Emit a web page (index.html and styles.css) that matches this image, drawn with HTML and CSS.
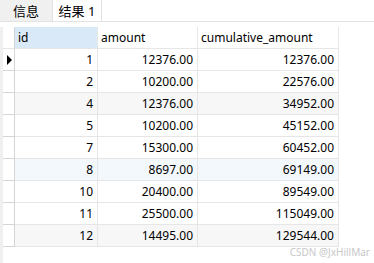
FILE: index.html
```html
<!DOCTYPE html>
<html>
<head>
<meta charset="utf-8">
<link rel="stylesheet" href="styles.css">
</head>
<body>
<div class="tabs">
  <div class="tab">信息</div>
  <div class="tab active">结果 1</div>
</div>
<div class="body">
  <div class="strip"></div>
  <div class="grid">
    <div class="sel head"></div>
    <div class="cell head hl">id</div>
    <div class="cell head">amount</div>
    <div class="cell head">cumulative_amount</div>

    <div class="sel"><span class="arrow"></span></div>
    <div class="cell num">1</div><div class="cell num">12376.00</div><div class="cell num">12376.00</div>

    <div class="sel"></div>
    <div class="cell num">2</div><div class="cell num">10200.00</div><div class="cell num">22576.00</div>

    <div class="sel"></div>
    <div class="cell num g">4</div><div class="cell num g">12376.00</div><div class="cell num g">34952.00</div>

    <div class="sel"></div>
    <div class="cell num">5</div><div class="cell num">10200.00</div><div class="cell num">45152.00</div>

    <div class="sel"></div>
    <div class="cell num">7</div><div class="cell num">15300.00</div><div class="cell num">60452.00</div>

    <div class="sel"></div>
    <div class="cell num b">8</div><div class="cell num b">8697.00</div><div class="cell num b">69149.00</div>

    <div class="sel"></div>
    <div class="cell num">10</div><div class="cell num">20400.00</div><div class="cell num">89549.00</div>

    <div class="sel"></div>
    <div class="cell num">11</div><div class="cell num">25500.00</div><div class="cell num">115049.00</div>

    <div class="sel"></div>
    <div class="cell num g">12</div><div class="cell num g">14495.00</div><div class="cell num g">129544.00</div>
  </div>
</div>
<div class="wm">CSDN @JxHillMar</div>
</body>
</html>
```
FILE: styles.css
```css
html, body {
  margin: 0;
  padding: 0;
  background: #fff;
  width: 374px;
  height: 263px;
  overflow: hidden;
}
body {
  font-family: "Noto Sans", "Noto Sans CJK SC", sans-serif;
  font-size: 12px;
  color: #000;
  position: relative;
}
.tabs {
  display: flex;
  height: 21px;
  border-bottom: 1px solid #e3e3e3;
}
.tab {
  width: 52px;
  background: #f0f0f0;
  border-right: 1px solid #e3e3e3;
  display: flex;
  align-items: center;
  justify-content: center;
  font-size: 13px;
}
.tab.active {
  width: 48px;
  background: #fff;
}
.body {
  display: flex;
  margin-top: 5px;
  height: 236px;
}
.strip {
  width: 3px;
  background: #f0f0f0;
}
.grid {
  display: grid;
  grid-template-columns: 12px 83px 100px 141px;
  grid-auto-rows: 22px;
  align-content: start;
}
.sel {
  border-right: 1px solid #d5d5d5;
  border-bottom: 1px solid #d5d5d5;
  position: relative;
}
.sel.head {
  border-bottom-color: #e6e6e6;
}
.cell {
  border-right: 1px solid #e6e6e6;
  border-bottom: 1px solid #e6e6e6;
  display: flex;
  align-items: center;
  padding: 0 4px 0 3px;
  white-space: nowrap;
}
.cell.head {
  background: #fff;
}
.cell.hl {
  background: #d9e9f7;
}
.num {
  justify-content: flex-end;
}
.g {
  background: #f7f7f7;
}
.b {
  background: #f3f8fc;
}
.arrow {
  position: absolute;
  left: 4px;
  top: 6px;
  width: 0;
  height: 0;
  border-top: 5px solid transparent;
  border-bottom: 5px solid transparent;
  border-left: 5px solid #000;
}
.wm {
  position: absolute;
  right: 4px;
  bottom: 4px;
  font-family: "Noto Sans", sans-serif;
  font-size: 10px;
  color: #c8c8c8;
}
```
